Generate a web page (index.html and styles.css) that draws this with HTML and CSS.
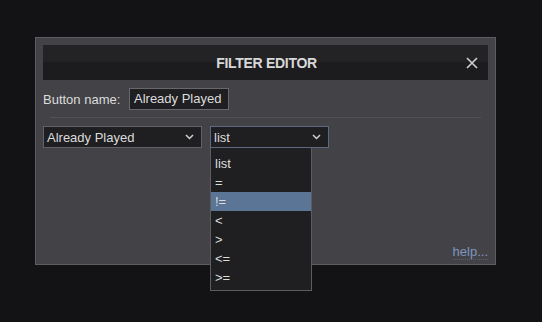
FILE: index.html
```html
<!DOCTYPE html>
<html>
<head>
<meta charset="utf-8">
<link rel="stylesheet" href="styles.css">
</head>
<body>
<div class="dialog">
  <div class="header">
    <span class="title">FILTER EDITOR</span>
    <svg class="close" width="12" height="12" viewBox="0 0 12 12"><path d="M1 1L11 11M11 1L1 11" stroke="#d0d0d0" stroke-width="1.6" fill="none"/></svg>
  </div>
  <div class="content">
    <div class="row name-row">
      <span class="label">Button name:</span>
      <span class="input">Already Played</span>
    </div>
    <div class="sep"></div>
    <div class="row select-row">
      <div class="select sel1">
        <span>Already Played</span>
        <svg class="chev" width="9" height="6" viewBox="0 0 9 6"><path d="M1 1L4.5 4.5L8 1" stroke="#d0d0d0" stroke-width="1.5" fill="none"/></svg>
      </div>
      <div class="select-wrap">
        <div class="select sel2">
          <span>list</span>
          <svg class="chev" width="9" height="6" viewBox="0 0 9 6"><path d="M1 1L4.5 4.5L8 1" stroke="#d0d0d0" stroke-width="1.5" fill="none"/></svg>
        </div>
        <ul class="menu">
          <li>list</li>
          <li>=</li>
          <li class="active">!=</li>
          <li>&lt;</li>
          <li>&gt;</li>
          <li>&lt;=</li>
          <li>&gt;=</li>
        </ul>
      </div>
    </div>
  </div>
  <div class="footer"><a class="help">help...</a></div>
</div>
</body>
</html>
```
FILE: styles.css
```css
html, body {
  margin: 0;
  padding: 0;
  background: #131315;
  width: 542px;
  height: 322px;
  overflow: hidden;
  font-family: "Liberation Sans", Arial, sans-serif;
  font-size: 13px;
  color: #dcdcdc;
}
.dialog {
  margin: 37px 0 0 35px;
  border: 1px solid #5d5d61;
  background: #434347;
  padding: 7px 7px 4px 7px;
  box-sizing: border-box;
  width: 461px;
  height: 228px;
  display: flex;
  flex-direction: column;
}
.header {
  height: 35px;
  background: linear-gradient(#232326 0, #232326 48%, #1c1c1f 48%, #1c1c1f 100%);
  display: flex;
  align-items: center;
  justify-content: center;
  position: relative;
  flex: none;
}
.title {
  font-weight: bold;
  font-size: 14px;
  color: #d8d8d8;
  letter-spacing: -0.3px;
  margin-left: 2px;
}
.close {
  position: absolute;
  right: 10px;
  top: 12px;
}
.content {
  flex: 1;
}
.row {
  display: flex;
  align-items: center;
}
.name-row {
  margin-top: 8px;
  height: 22px;
}
.label {
  width: 86px;
}
.input {
  box-sizing: border-box;
  width: 100px;
  height: 22px;
  border: 1px solid #68686c;
  background: #1f1f22;
  padding: 0 4px;
  line-height: 20px;
}
.sep {
  margin: 7px 7px 0 7px;
  height: 1px;
  background: #525256;
}
.select-row {
  margin-top: 8px;
  gap: 8px;
  align-items: flex-start;
}
.select {
  box-sizing: border-box;
  height: 22px;
  border: 1px solid #626266;
  background: #1f1f22;
  display: flex;
  align-items: center;
  justify-content: space-between;
  padding: 0 7px 0 3px;
}
.sel1 { width: 159px; }
.sel2 { width: 119px; border-color: #5b6a80; padding-left: 3px; }
.select-wrap {
  position: relative;
}
.menu {
  position: absolute;
  left: 0;
  top: 22px;
  width: 102px;
  box-sizing: border-box;
  margin: 0;
  padding: 6px 0 4px 0;
  list-style: none;
  background: #1f1f22;
  border: 1px solid #5d5d61;
  border-top: none;
  height: 143px;
}
.menu li {
  height: 19px;
  line-height: 19px;
  padding-left: 4px;
}
.menu li.active {
  background: #5a7596;
}
.footer {
  display: flex;
  justify-content: flex-end;
}
.help {
  color: #7f95c0;
  font-size: 13px;
  border-bottom: 1px dotted #565d6c;
  line-height: 15px;
}
```
